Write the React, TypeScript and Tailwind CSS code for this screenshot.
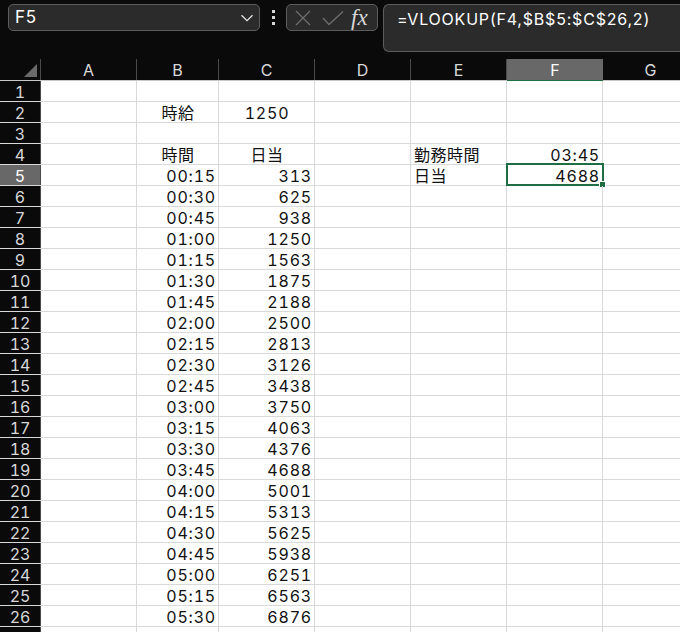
const font = "font-['Inter','Noto_Sans_CJK_JP',sans-serif]"

const columns = [
  { name: "A", width: "w-[96px]" },
  { name: "B", width: "w-[82px]" },
  { name: "C", width: "w-[96px]" },
  { name: "D", width: "w-[96px]" },
  { name: "E", width: "w-[96px]" },
  { name: "F", width: "w-[96px]" },
  { name: "G", width: "w-[96px]" },
]

const pay = [
  ["00:15", "313"],
  ["00:30", "625"],
  ["00:45", "938"],
  ["01:00", "1250"],
  ["01:15", "1563"],
  ["01:30", "1875"],
  ["01:45", "2188"],
  ["02:00", "2500"],
  ["02:15", "2813"],
  ["02:30", "3126"],
  ["02:45", "3438"],
  ["03:00", "3750"],
  ["03:15", "4063"],
  ["03:30", "4376"],
  ["03:45", "4688"],
  ["04:00", "5001"],
  ["04:15", "5313"],
  ["04:30", "5625"],
  ["04:45", "5938"],
  ["05:00", "6251"],
  ["05:15", "6563"],
  ["05:30", "6876"],
]

type CellValue = { text: string; align?: "left" | "right" | "center" }

// sheet contents keyed by row number, then column
const rows: Record<number, Record<string, CellValue>> = {
  2: { B: { text: "時給", align: "center" }, C: { text: "1250", align: "center" } },
  4: {
    B: { text: "時間", align: "center" },
    C: { text: "日当", align: "center" },
    E: { text: "勤務時間" },
    F: { text: "03:45", align: "right" },
  },
  5: { E: { text: "日当" }, F: { text: "4688", align: "right" } },
}

pay.forEach(([time, amount], i) => {
  const n = i + 5
  rows[n] = { ...rows[n], B: { text: time, align: "right" }, C: { text: amount, align: "right" } }
})

function Cell({ col, row }: { col: (typeof columns)[number]; row: number }) {
  const value = rows[row]?.[col.name]
  const selected = col.name === "F" && row === 5
  const cjk = value?.text.match(/[^\d:]/)
  return (
    <div
      className={`${col.width} relative box-border flex h-full shrink-0 items-center overflow-visible whitespace-nowrap border-r border-[#d9d9d9] pl-[3px] pr-[2px] pt-[2px] text-[16px] leading-none tabular-nums text-[#111] ${
        cjk ? "tracking-[0.5px]" : "tracking-[0.8px]"
      } ${value?.align === "right" ? "justify-end" : value?.align === "center" ? "justify-center" : "justify-start"}`}
    >
      {value?.text}
      {selected && (
        <div className="absolute -left-px -top-[2px] h-[23px] w-[98px] border-2 border-[#1f6e43]">
          <div className="absolute -bottom-[4px] -right-[4px] h-[7px] w-[7px] border border-white bg-[#1f6e43]" />
        </div>
      )}
    </div>
  )
}

export default function App() {
  const rowNumbers = Array.from({ length: 27 }, (_, i) => i + 1)

  return (
    <div className={`${font} h-[632px] w-[680px] overflow-hidden bg-[#0a0a0a]`}>
      <div className="flex h-[59px] items-start pl-2 pt-1">
        <div className="flex h-[27px] w-[252px] items-center justify-between rounded-[5px] border border-[#5c5c5c] bg-[#2b2b2b] pl-[6px] pr-[5px] text-[17px] tracking-[0.8px] text-white">
          F5
          <svg width="14" height="8" viewBox="0 0 14 8" fill="none" stroke="#e6e6e6" strokeWidth="1.3">
            <path d="M1.5 1.2 7 6.6l5.5-5.4" />
          </svg>
        </div>
        <div className="ml-[12px] flex h-[27px] w-[3px] flex-col justify-center gap-[3px]">
          <span className="h-[3px] w-[3px] bg-[#d6d6d6]" />
          <span className="h-[3px] w-[3px] bg-[#d6d6d6]" />
          <span className="h-[3px] w-[3px] bg-[#d6d6d6]" />
        </div>
        <div className="ml-[11px] flex h-[27px] w-[92px] items-center rounded-[5px] border border-[#5c5c5c] bg-[#2b2b2b] pl-[8px]">
          <svg width="16" height="16" viewBox="0 0 16 16" fill="none" stroke="#6e6e6e" strokeWidth="1.3">
            <path d="M1 1l14 14M15 1 1 15" />
          </svg>
          <svg className="ml-[11px]" width="22" height="16" viewBox="0 0 22 16" fill="none" stroke="#6e6e6e" strokeWidth="1.3">
            <path d="M1 8l6 6.5L21 1.5" />
          </svg>
          <span className="ml-[7px] font-['Liberation_Serif',serif] text-[23px] italic leading-none text-[#d8d8d8]">fx</span>
        </div>
        <div className="ml-[5px] h-[48px] flex-1 rounded-l-[6px] border border-r-0 border-[#5c5c5c] bg-[#2b2b2b] pl-[13px] pt-[2px] text-[16px] tracking-[0.8px] text-white">
          =VLOOKUP(F4,$B$5:$C$26,2)
        </div>
      </div>

      <div className="flex h-[21px] text-[16px] text-[#d8d8d8]">
        <div className="flex w-[41px] shrink-0 items-end justify-end border-r border-[#4a4a4a] pb-[3px] pr-[3px]">
          <div className="h-[13px] w-[13px] bg-[#6a6a6a] [clip-path:polygon(100%_0,100%_100%,0_100%)]" />
        </div>
        {columns.map((col) => (
          <div
            key={col.name}
            className={`${col.width} flex shrink-0 items-center justify-center ${
              col.name === "F" ? "bg-[#686868] text-white" : "border-r border-[#4a4a4a]"
            }`}
          >
            {col.name}
          </div>
        ))}
      </div>
      <div className="flex h-[1px]">
        <div className="w-[507px] bg-[#c8c8c8]" />
        <div className="w-[96px] bg-[#1f6e43]" />
        <div className="flex-1 bg-[#c8c8c8]" />
      </div>

      {rowNumbers.map((row) => (
        <div key={row} className="flex h-[21px] border-b border-[#d9d9d9] bg-white">
          <div
            className={`flex w-[41px] shrink-0 items-center justify-center border-r border-[#4a4a4a] pt-[2px] text-[16px] leading-none tabular-nums ${
              row === 5 ? "bg-[#686868] text-white" : "bg-[#0a0a0a] text-[#d8d8d8]"
            }`}
          >
            {row}
          </div>
          {columns.map((col) => (
            <Cell key={col.name} col={col} row={row} />
          ))}
        </div>
      ))}
    </div>
  )
}
